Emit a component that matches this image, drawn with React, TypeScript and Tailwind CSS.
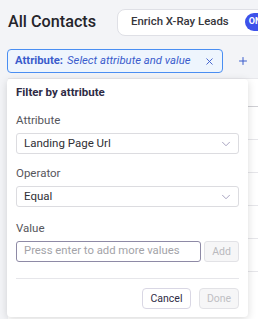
import { X, Plus, ChevronDown } from 'lucide-react';

const font = { fontFamily: 'Roboto, "Liberation Sans", sans-serif' };

function SelectBox({ value }: { value: string }) {
  return (
    <div className="flex items-center justify-between h-[21px] border border-[#dcdce0] rounded-[3px] pl-[7px] pr-[5px] bg-white">
      <span className="text-[11.5px] text-[#2f2f35]">{value}</span>
      <ChevronDown size={14} strokeWidth={1.3} className="text-[#8d87ad]" />
    </div>
  );
}

export default function App() {
  return (
    <div className="relative w-[258px] h-[319px] overflow-hidden bg-[#f3f4f7]" style={font}>
      {/* Header */}
      <div className="flex items-center h-[43px] pl-[8px] pt-[1px] whitespace-nowrap">
        <h1 className="text-[16.2px] font-medium text-[#25252b] w-[109px] shrink-0">All Contacts</h1>
        <div className="flex items-center h-[27px] w-[170px] shrink-0 bg-white border border-[#dfe0e6] rounded-l-[8px] pl-[13px]">
          <span className="text-[11.4px] font-medium text-[#36363c]">Enrich X-Ray Leads</span>
          <div className="ml-[16px] h-[18px] w-[30px] shrink-0 rounded-l-full bg-[#3d52ea] flex items-center pl-[4px]">
            <span className="text-[9px] font-bold text-white">ON</span>
          </div>
        </div>
      </div>

      {/* Filter chip row */}
      <div className="flex items-center pl-[7px] mt-[6px] whitespace-nowrap">
        <div className="flex items-center h-[24px] w-[216px] shrink-0 border border-[#4a8ef2] bg-[#eef5fd] rounded-[4px] pl-[7px]">
          <span className="text-[11.3px] font-bold text-[#3a5ccc]">Attribute:</span>
          <span className="ml-[4px] text-[11.3px] italic text-[#3a5ccc]">Select attribute and value</span>
          <X size={11} strokeWidth={2} className="ml-[13px] shrink-0 text-[#3a5ccc]" />
        </div>
        <Plus size={12} strokeWidth={2} className="ml-[14px] shrink-0 text-[#3a5ccc]" />
      </div>

      {/* Table behind */}
      <div className="ml-[8px] mt-[5px] bg-white h-[260px] border-t border-[#e8e8ec]">
        <div className="h-[28px] border-b border-[#cfcfd4]" />
        <div className="h-[33px] border-b border-[#e6e6ea]" />
        <div className="h-[33px] border-b border-[#e6e6ea]" />
        <div className="h-[33px] border-b border-[#e6e6ea]" />
        <div className="h-[33px] border-b border-[#e6e6ea]" />
        <div className="h-[33px] border-b border-[#e6e6ea]" />
        <div className="pl-[24px] pt-[33px] text-[12px] text-[#333] leading-[14px]">Mobile</div>
      </div>

      {/* Popover */}
      <div className="absolute left-[7px] top-[79px] w-[241px] h-[238px] bg-white rounded-[4px] shadow-[0_2px_8px_rgba(0,0,0,0.15)] px-[9px] pt-[6px] whitespace-nowrap">
        <div className="text-[11.5px] font-bold text-[#2e2b45] leading-[14px]">Filter by attribute</div>

        <div className="mt-[14px] text-[11.5px] text-[#56565c] leading-[15px]">Attribute</div>
        <div className="mt-[5px]">
          <SelectBox value="Landing Page Url" />
        </div>

        <div className="mt-[12px] text-[11.5px] text-[#56565c] leading-[15px]">Operator</div>
        <div className="mt-[5px]">
          <SelectBox value="Equal" />
        </div>

        <div className="mt-[14px] text-[11.5px] text-[#56565c] leading-[15px]">Value</div>
        <div className="mt-[5px] flex items-center gap-[3px]">
          <div className="flex items-center flex-1 h-[21px] border border-[#8e8aa6] rounded-[3px] pl-[7px]">
            <span className="text-[11.3px] text-[#a3a3a8]">Press enter to add more values</span>
          </div>
          <div className="flex items-center justify-center w-[35px] h-[21px] border border-[#e2e2e6] bg-[#f6f6f7] rounded-[3px]">
            <span className="text-[10.5px] text-[#b9b9bd]">Add</span>
          </div>
        </div>

        <div className="mt-[16px] border-t border-[#e6e6ea]" />

        <div className="mt-[9px] flex justify-end gap-[8px]">
          <div className="flex items-center justify-center w-[49px] h-[21px] border border-[#d9d7e4] rounded-[4px] bg-white">
            <span className="text-[10.5px] text-[#2e2b45]">Cancel</span>
          </div>
          <div className="flex items-center justify-center w-[40px] h-[21px] border border-[#e2e2e6] rounded-[4px] bg-[#f6f6f7]">
            <span className="text-[10.5px] text-[#c0c0c4]">Done</span>
          </div>
        </div>
      </div>
    </div>
  );
}
